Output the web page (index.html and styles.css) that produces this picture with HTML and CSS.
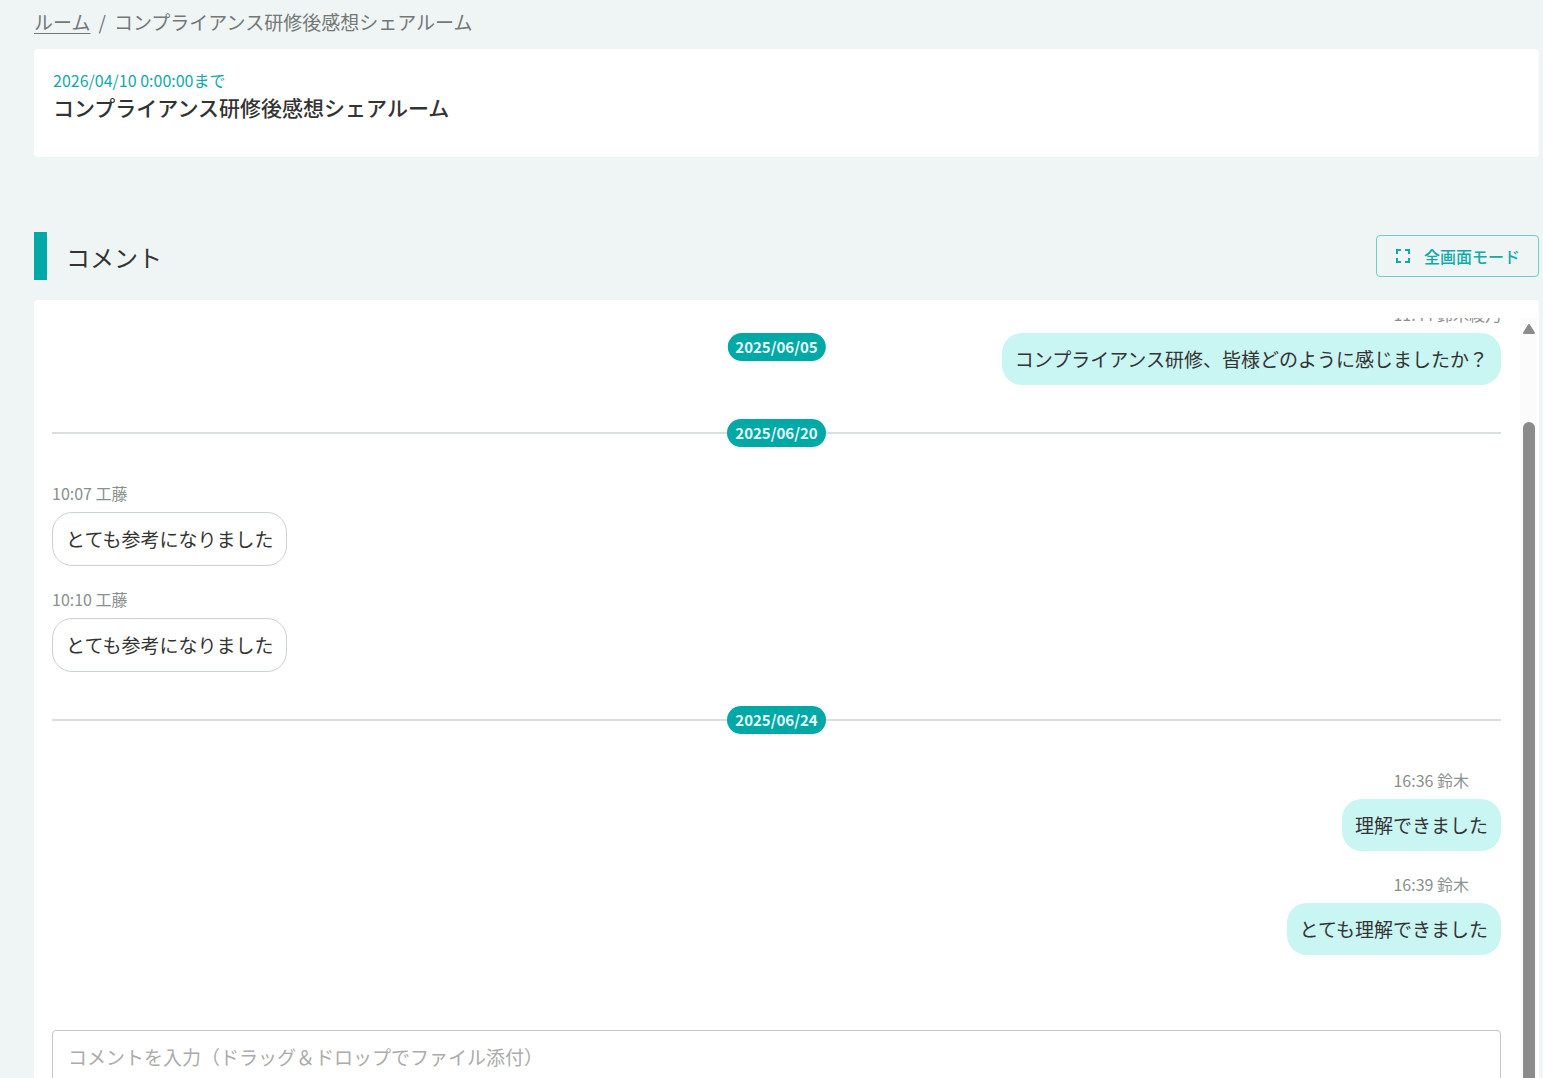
FILE: index.html
```html
<!DOCTYPE html>
<html lang="ja">
<head>
<meta charset="utf-8">
<meta name="viewport" content="width=device-width, initial-scale=1">
<title>コンプライアンス研修後感想シェアルーム</title>
<link rel="stylesheet" href="styles.css">
</head>
<body>
<main class="page">
  <nav class="breadcrumb" aria-label="パンくず">
    <a href="#">ルーム</a><span>/</span><span>コンプライアンス研修後感想シェアルーム</span>
  </nav>

  <section class="room-card">
    <p class="deadline">2026/04/10 0:00:00まで</p>
    <h1 class="room-title">コンプライアンス研修後感想シェアルーム</h1>
  </section>

  <header class="section-head">
    <h2 class="section-title">コメント</h2>
    <button type="button" class="fullscreen-button">
      <svg class="fullscreen-icon" viewBox="0 0 16 16" aria-hidden="true">
        <path d="M2 6V2H6M10 2H14V6M14 10V14H10M6 14H2V10" fill="none" stroke="currentColor" stroke-width="2"/>
      </svg>
      <span>全画面モード</span>
    </button>
  </header>

  <section class="chat">
    <div class="thread">
      <time class="date-badge current-date">2025/06/05</time>

      <article class="message mine clipped">
        <p class="meta">11:44 鈴木綾乃</p>
        <p class="bubble">コンプライアンス研修、皆様どのように感じましたか？</p>
      </article>

      <div class="divider"><time class="date-badge">2025/06/20</time></div>

      <div class="group">
        <article class="message">
          <p class="meta">10:07 工藤</p>
          <p class="bubble">とても参考になりました</p>
        </article>
        <article class="message">
          <p class="meta">10:10 工藤</p>
          <p class="bubble">とても参考になりました</p>
        </article>
      </div>

      <div class="divider"><time class="date-badge">2025/06/24</time></div>

      <div class="group">
        <article class="message mine">
          <p class="meta indented">16:36 鈴木</p>
          <p class="bubble">理解できました</p>
        </article>
        <article class="message mine">
          <p class="meta indented">16:39 鈴木</p>
          <p class="bubble">とても理解できました</p>
        </article>
      </div>

      <textarea class="composer" aria-label="コメント" placeholder="コメントを入力（ドラッグ＆ドロップでファイル添付）"></textarea>
    </div>

    <div class="scrollbar" aria-hidden="true">
      <svg class="scroll-arrow" viewBox="0 0 12 10"><path d="M6 1L11 9H1Z" fill="#8b8b8b" stroke="#8b8b8b" stroke-width="2" stroke-linejoin="round"/></svg>
      <div class="scroll-thumb"></div>
    </div>
  </section>
</main>
</body>
</html>
```
FILE: styles.css
```css
* {
  box-sizing: border-box;
}

body {
  margin: 0;
  background: #eff5f5;
  color: #333;
  font-family: "Noto Sans CJK JP", sans-serif;
  font-size: 19px;
  line-height: 24px;
}

p,
h1,
h2 {
  margin: 0;
}

.page {
  display: flex;
  flex-direction: column;
  height: 100vh;
  padding: 10px 4px 0 34px;
  overflow: hidden;
}

.breadcrumb {
  display: flex;
  gap: 8px;
  margin-bottom: 15px;
  color: #737777;
}

.breadcrumb a {
  color: inherit;
  text-underline-offset: 3px;
}

.room-card {
  padding: 19px 19px 35px;
  border-radius: 4px;
  background: #fff;
}

.deadline {
  color: #12aaa7;
  font-size: 16px;
}

.room-title {
  font-size: 21px;
  font-weight: 500;
  line-height: 30px;
}

.section-head {
  display: flex;
  align-items: center;
  justify-content: space-between;
  margin: 75px 0 20px;
}

.section-title {
  padding: 2px 0 0 19px;
  border-left: 13px solid #00a9a6;
  font-size: 24px;
  font-weight: 400;
  line-height: 46px;
}

.fullscreen-button {
  display: flex;
  align-items: center;
  gap: 13px;
  padding: 8px 18px;
  border: 1px solid #6fcdca;
  border-radius: 4px;
  background: transparent;
  color: #12aaa7;
  font: 500 16px/24px "Noto Sans CJK JP", sans-serif;
}

.fullscreen-icon {
  width: 16px;
  height: 16px;
}

.chat {
  display: flex;
  flex: 1;
  gap: 19px;
  min-height: 0;
  padding: 18px 2px 0 18px;
  border-radius: 4px 4px 0 0;
  background: #fff;
}

.thread {
  position: relative;
  display: flex;
  flex: 1;
  flex-direction: column;
  gap: 34px;
  overflow: hidden;
}

.date-badge {
  padding: 0 8px;
  border-radius: 14px;
  background: #00a9a6;
  color: #e6fafa;
  font-size: 15px;
  font-weight: 700;
  line-height: 28px;
}

.current-date {
  position: absolute;
  top: 15px;
  left: 50%;
  transform: translateX(-50%);
}

.divider {
  display: flex;
  align-items: center;
}

.divider::before,
.divider::after {
  content: "";
  flex: 1;
  height: 2px;
  background: #d9dfde;
}

.group {
  display: flex;
  flex-direction: column;
  gap: 21px;
}

.message {
  display: flex;
  flex-direction: column;
  align-items: flex-start;
  gap: 7px;
}

.mine {
  align-items: flex-end;
}

/* The oldest visible message is scrolled partly out of view. */
.clipped {
  margin-top: -16px;
}

.meta {
  color: #8a9090;
  font-size: 16px;
}

.indented {
  padding-right: 32px;
}

.bubble {
  padding: 14px 13px;
  border: 1px solid #c8d2d0;
  border-radius: 20px;
}

.mine .bubble {
  border: 0;
  background: #c9f5f2;
}

.composer {
  display: block;
  flex: none;
  width: 100%;
  height: 120px;
  margin-top: 41px;
  padding: 14px 15px;
  border: 1px solid #c4c6c6;
  border-radius: 4px;
  background: #fff;
  color: #333;
  font: inherit;
  resize: none;
}

.composer::placeholder {
  color: #ababab;
}

.scrollbar {
  display: flex;
  flex-direction: column;
  align-items: center;
  gap: 88px;
  width: 17px;
  padding-top: 6px;
  background: #fbfbfb;
}

.scroll-arrow {
  width: 12px;
  height: 10px;
}

.scroll-thumb {
  flex: 1;
  width: 12px;
  border-radius: 6px 6px 0 0;
  background: #8b8b8b;
}
```
